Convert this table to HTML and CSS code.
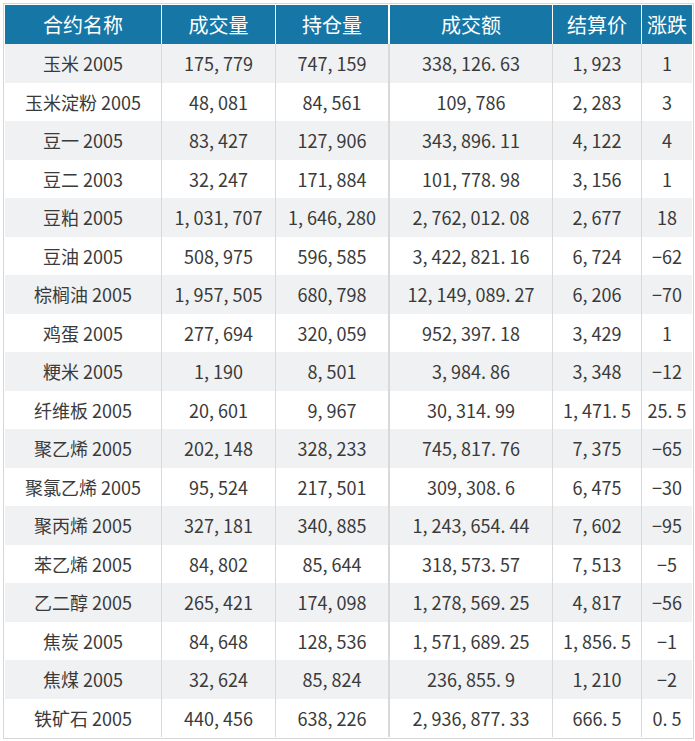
FILE: index.html
```html
<!DOCTYPE html>
<html lang="zh-CN">
<head>
<meta charset="utf-8">
<title>合约行情</title>
<link rel="stylesheet" href="styles.css">
</head>
<body>
<div class="frame">
<table class="quotes">
<colgroup>
<col class="c1"><col class="c2"><col class="c3"><col class="c4"><col class="c5"><col class="c6">
</colgroup>
<thead>
<tr><th>合约名称</th><th>成交量</th><th>持仓量</th><th class="wide">成交额</th><th>结算价</th><th>涨跌</th></tr>
</thead>
<tbody>
<tr><td>玉米 2005</td><td>175, 779</td><td>747, 159</td><td class="wide">338, 126. 63</td><td>1, 923</td><td>1</td></tr>
<tr><td>玉米淀粉 2005</td><td>48, 081</td><td>84, 561</td><td class="wide">109, 786</td><td>2, 283</td><td>3</td></tr>
<tr><td>豆一 2005</td><td>83, 427</td><td>127, 906</td><td class="wide">343, 896. 11</td><td>4, 122</td><td>4</td></tr>
<tr><td>豆二 2003</td><td>32, 247</td><td>171, 884</td><td class="wide">101, 778. 98</td><td>3, 156</td><td>1</td></tr>
<tr><td>豆粕 2005</td><td>1, 031, 707</td><td>1, 646, 280</td><td class="wide">2, 762, 012. 08</td><td>2, 677</td><td>18</td></tr>
<tr><td>豆油 2005</td><td>508, 975</td><td>596, 585</td><td class="wide">3, 422, 821. 16</td><td>6, 724</td><td>−62</td></tr>
<tr><td>棕榈油 2005</td><td>1, 957, 505</td><td>680, 798</td><td class="wide">12, 149, 089. 27</td><td>6, 206</td><td>−70</td></tr>
<tr><td>鸡蛋 2005</td><td>277, 694</td><td>320, 059</td><td class="wide">952, 397. 18</td><td>3, 429</td><td>1</td></tr>
<tr><td>粳米 2005</td><td>1, 190</td><td>8, 501</td><td class="wide">3, 984. 86</td><td>3, 348</td><td>−12</td></tr>
<tr><td>纤维板 2005</td><td>20, 601</td><td>9, 967</td><td class="wide">30, 314. 99</td><td>1, 471. 5</td><td>25. 5</td></tr>
<tr><td>聚乙烯 2005</td><td>202, 148</td><td>328, 233</td><td class="wide">745, 817. 76</td><td>7, 375</td><td>−65</td></tr>
<tr><td>聚氯乙烯 2005</td><td>95, 524</td><td>217, 501</td><td class="wide">309, 308. 6</td><td>6, 475</td><td>−30</td></tr>
<tr><td>聚丙烯 2005</td><td>327, 181</td><td>340, 885</td><td class="wide">1, 243, 654. 44</td><td>7, 602</td><td>−95</td></tr>
<tr><td>苯乙烯 2005</td><td>84, 802</td><td>85, 644</td><td class="wide">318, 573. 57</td><td>7, 513</td><td>−5</td></tr>
<tr><td>乙二醇 2005</td><td>265, 421</td><td>174, 098</td><td class="wide">1, 278, 569. 25</td><td>4, 817</td><td>−56</td></tr>
<tr><td>焦炭 2005</td><td>84, 648</td><td>128, 536</td><td class="wide">1, 571, 689. 25</td><td>1, 856. 5</td><td>−1</td></tr>
<tr><td>焦煤 2005</td><td>32, 624</td><td>85, 824</td><td class="wide">236, 855. 9</td><td>1, 210</td><td>−2</td></tr>
<tr><td>铁矿石 2005</td><td>440, 456</td><td>638, 226</td><td class="wide">2, 936, 877. 33</td><td>666. 5</td><td>0. 5</td></tr>
</tbody>
</table>
</div>
</body>
</html>
```
FILE: styles.css
```css
html, body {
  margin: 0;
  padding: 0;
  background: #ffffff;
}

body {
  padding: 3px 0 0 3px;
  font-family: "Noto Sans CJK SC", "Noto Sans", sans-serif;
}

.frame {
  width: 687px;
  border: 1px solid #d6d6d6;
  padding: 1px;
  background: #ffffff;
}

.quotes {
  width: 687px;
  table-layout: fixed;
  border-collapse: separate;
  border-spacing: 0;
}

.c1 { width: 157px; }
.c2 { width: 114px; }
.c3 { width: 113px; }
.c4 { width: 164px; }
.c5 { width: 89px; }
.c6 { width: 50px; }

.quotes th,
.quotes td {
  box-sizing: border-box;
  padding: 0;
  text-align: center;
  white-space: nowrap;
  overflow: hidden;
}

.quotes th {
  height: 39px;
  background: #1677a7;
  color: #ffffff;
  font-size: 20px;
  font-weight: 400;
  border-right: 1px solid #ffffff;
}

.quotes th.wide {
  border-left: 1px solid #ffffff;
}

.quotes th:last-child {
  border-right: none;
}

.quotes td {
  height: 38.5px;
  color: #3a3a3a;
  font-size: 18px;
  border-right: 1px solid #d9d9d9;
}

.quotes td.wide {
  border-left: 1px solid #d9d9d9;
}

.quotes td:last-child {
  border-right: none;
}

.quotes tbody tr:nth-child(odd) td {
  background: #f0f1f3;
}

.quotes tbody tr:nth-child(even) td {
  background: #ffffff;
}
```
